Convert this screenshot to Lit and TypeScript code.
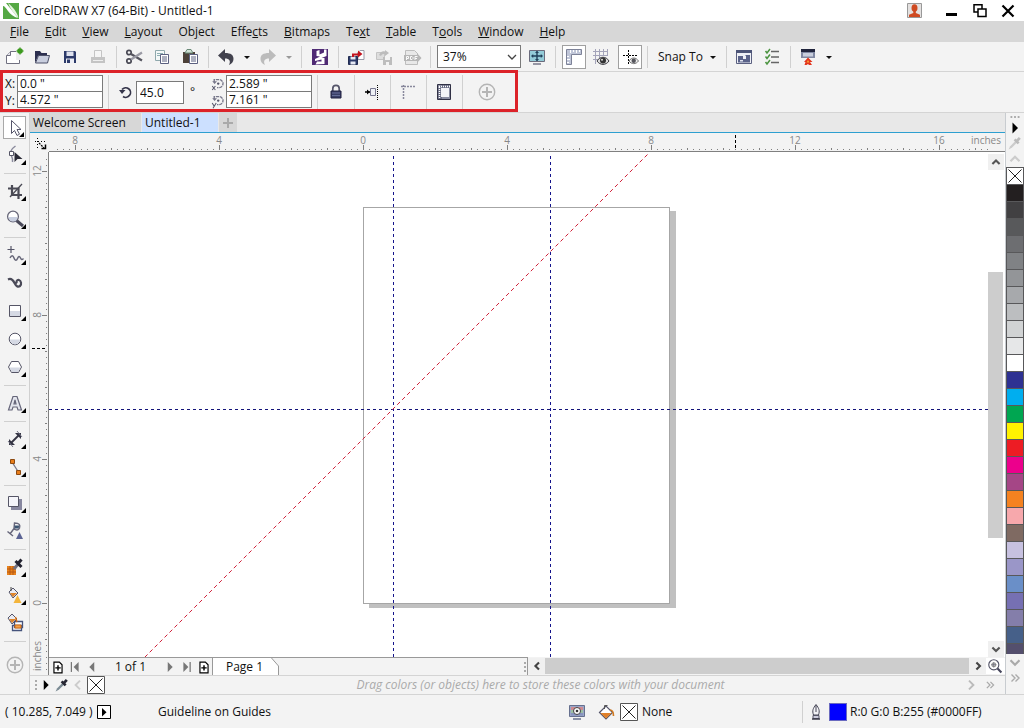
import { LitElement, html, svg, css } from "lit";
import type { SVGTemplateResult } from "lit";
import { customElement } from "lit/decorators.js";
import { styleMap } from "lit/directives/style-map.js";

/* Icon artwork, drawn on a 20 x 20 box (carets on 10 x 10). */
const art: Record<string, SVGTemplateResult> = {
  newdoc: svg`<path d="M2.500 8.500 6.500 4.500h9v12h-13z" fill="#fff" stroke="#707080"/><path d="M2.500 8.500h4v-4" fill="#e4e4ea" stroke="#707080"/><path d="M12 4h4v9h-4z" fill="#eee"/><circle cx="16" cy="4" r="2.800" fill="#3c9a1e"/><path d="M16 .3v7.400M12.300 4h7.400" stroke="#3c9a1e"/>`,
  open: svg`<path d="M3 16V4h5l1.500 2H15v3H6z" fill="#2d3050"/><path d="M6.500 8.500h11L15.500 16h-12z" fill="#c9cede" stroke="#4c5068"/>`,
  save: svg`<path d="M4 4h11l1 1v11H4z" fill="#2c3a6a"/><path d="M6.500 4.500h7v4.500h-7z" fill="#dfe2ee"/><path d="M6 11.500h8V16H6z" fill="#eceef5"/><path d="M7 12.500h3V16H7z" fill="#2c3a6a"/>`,
  print: svg`<path d="M6.500 3.500h7v7h-7z" fill="#f5f5f5" stroke="#c4c4c4"/><path d="M3 10h14v6H3z" fill="#c4c4c4"/><path d="M5 13.500h10" stroke="#eee"/>`,
  cut: svg`<circle cx="5" cy="5.500" r="2.200" fill="none" stroke="#4a4a55" stroke-width="1.700"/><circle cx="5" cy="14" r="2.200" fill="none" stroke="#4a4a55" stroke-width="1.700"/><path d="M7 7l11 6.500" stroke="#55555f" stroke-width="2.200"/><path d="M7 12.500l11-7" stroke="#9a9aa4" stroke-width="2.200"/>`,
  copy: svg`<path d="M3.500 3.500h9v10h-9z" fill="#f4f8f8" stroke="#8fa8ac"/><path d="M5 6.500h6M5 8.500h3" stroke="#8fb0b4"/><path d="M8.500 7.500h8v9h-8z" fill="#fff" stroke="#5b6080"/><path d="M10 10h5M10 12h5M10 14h5" stroke="#5b6080"/>`,
  paste: svg`<path d="M3 5h12v11H3z" fill="#4c4038"/><path d="M5 6l2-3.500h4L13 6z" fill="#cfe0d4" stroke="#6b8a78"/><path d="M9.500 7.500h8v9h-8z" fill="#fff" stroke="#5b6080"/><path d="M11 10h5M11 12h5M11 14h5" stroke="#5b6080"/>`,
  undo: svg`<path d="M2 8.500 9 2v4c6 0 8.500 2 8.500 6 0 3-2 5-4.500 6 2-4 .5-6.500-4-6.500V15z" fill="#42424e"/>`,
  redo: svg`<path d="M18 8.500 11 2v4c-6 0-8.500 2-8.500 6 0 3 2 5 4.500 6-2-4-.5-6.500 4-6.500V15z" fill="#bcbcbc"/>`,
  caret: svg`<path d="M2 4h6L5 7z" fill="#111"/>`,
  caretoff: svg`<path d="M2 4h6L5 7z" fill="#999"/>`,
  connect: svg`<path d="M2 2h16v16H2z" fill="#4f2a74"/><path d="M6.500 4 9.500 3v4.500l4.500-2V2.500h2.500V9l-5 2h3v6l-9 .5 1.500-3h4.500v-2L5 14v-2l5-2.500-3.500-.5z" fill="#fff"/>`,
  import: svg`<path d="M11.500 6 14 3.500h4v9h-6z" fill="#fff" stroke="#9a9aa8"/><path d="M2.500 9.500h9v8h-9z" fill="#2c3a6a" stroke="#222c50"/><path d="M4.500 9.500h5v3h-5zM4.500 14.500h5v3h-5z" fill="#e6e9f4"/><path d="M6 10V6.500h6V3.500L16.500 7 12 10.500v-2H8V10z" fill="#c2131f"/>`,
  export: svg`<path d="M2.500 5.500h8v7h-8z" fill="#ddd" stroke="#c4c4c4"/><path d="M5 8c2-4 4-4 6-3.500L11 3l4 3-4 3V7c-2 0-3 0-4 2z" fill="#bcbcbc"/><path d="M9 10h9v8H9z" fill="#bdbdbd"/><path d="M11 10h5v3h-5zM12 15h3v3h-3z" fill="#f3f3f3"/>`,
  pdf: svg`<path d="M3.500 3.500h9l3 3v11h-12z" fill="#e8e8e8" stroke="#bdbdbd"/><path d="M2 8h13V6l4.500 5-4.500 5v-2H2z" fill="#b6b6b6"/><path d="M4.500 13V9.500h2v2h-2M8.500 9.500h1.500l1 1v1l-1 1H8.500zM13 13V9.500h2.500M13 11.500h2" fill="none" stroke="#fafafa"/>`,
  full: svg`<path d="M2.500 3.500h15v11h-15z" fill="#93cbd8" stroke="#6b6b7c"/><path d="M10 4.500v9M5 9h10" stroke="#20405a" stroke-width="1.400"/><path d="M10 3.800l2 2.200H8zM10 14.200l2-2.200H8zM4 9l2.200-2v4zM16 9l-2.200-2v4z" fill="#20405a"/><path d="M6 17h8" stroke="#77778a" stroke-width="1.500"/>`,
  rulers: svg`<path d="M2.500 2.500h15v5h-10v10h-5z" fill="#c0c6d8" stroke="#7d8298"/><path d="M6.500 3v3M9.500 3v2M12.500 3v3M15.500 3v2M3 9.500h2M3 12.500h3M3 15.500h2" stroke="#fff"/>`,
  grid: svg`<path d="M2 4.500h15M2 8.500h15M2 12.500h8M4.500 2v15M8.500 2v14M12.500 2v7M16.500 2v7" stroke="#a4a4ba"/><path d="M6 14c3-5 9-5 12 0-3 4.500-9 4.500-12 0z" fill="#ddd" stroke="#3a3a40"/><circle cx="12" cy="13.500" r="3" fill="#333"/><circle cx="11" cy="12.800" r="1" fill="#ddd"/>`,
  guides: svg`<path d="M8.500 3v15M3 8.500h15" stroke="#000" stroke-dasharray="2 1"/><path d="M9 14c2.500-4 7-4 9.500 0-2.500 3.500-7 3.500-9.500 0z" fill="#eee" stroke="#777"/><circle cx="13.700" cy="13.800" r="2.200" fill="#55555c"/>`,
  welcome: svg`<path d="M2.500 3.500h15v13h-15z" fill="#eef0f6" stroke="#5b6080"/><path d="M2 3h16v3H2z" fill="#4d5578"/><path d="M4 9h5v3h3V9l-1-1h5v7.500H4z" fill="#5b638a"/><path d="M6 13h3v1.500H6z" fill="#dfe3ef"/>`,
  options: svg`<path d="M9 4.500h8M9 10h8M9 15.500h8" stroke="#666" stroke-width="1.600"/><path d="M3.500 4 5 6l3-4M3.500 9.500 5 11.500l3-4M3.500 15 5 17l3-4" fill="none" stroke="#4b9440" stroke-width="1.500"/>`,
  launch: svg`<path d="M3 2h14v9H3z" fill="#8088a2"/><path d="M3 2h14v3H3z" fill="#20243c"/><path d="M5 6h10v3.500H5z" fill="#c8cedd"/><path d="M10 10.500 14.500 15H12l2 3h-3l-1-1-1.500 1H6.500l1-3H6z" fill="#e2341d"/><path d="M10 13l1.500 2.500h-3z" fill="#f8a030"/>`,
  rotate: svg`<path d="M6 7.500A4.800 4.800 0 1 1 7 14.500" fill="none" stroke="#35354a" stroke-width="1.700"/><path d="M3 8h6.500L6 12z" fill="#35354a"/>`,
  lock: svg`<path d="M6.800 9V6.500a3.200 3.200 0 0 1 6.400 0V9" fill="none" stroke="#55556a" stroke-width="1.700"/><path d="M5 9h10v7H5z" fill="#3a3f66" stroke="#202040"/><path d="M6 11h8M6 13.500h8" stroke="#666d98"/>`,
  snapguide: svg`<path d="M3 10h6" stroke="#000" stroke-width="1.500"/><path d="M5 7.500 8 10l-3 2.500z" fill="#000"/><path d="M8.500 6.500h5v7h-5z" fill="#eef0f5" stroke="#777790"/><path d="M15.500 3v15" stroke="#000" stroke-dasharray="1 1"/>`,
  corner: svg`<path d="M5.500 3v14M3 4.500h15" stroke="#88889c" stroke-width="1.500" stroke-dasharray="2 1"/>`,
  page: svg`<path d="M3.500 2.500h13v15h-13z" fill="#8a8da2" stroke="#303044"/><path d="M4 6l4-3h7v11H8v3H4z" fill="#6a6d84"/><path d="M7 6h8v9H7z" fill="#f4f4f8"/><path d="M5 4.500h11M5.500 5v11" stroke="#fff" stroke-width="1.500" stroke-dasharray="1 1"/>`,
  plus: svg`<circle cx="10" cy="10" r="7.700" fill="none" stroke="#b5b5b5" stroke-width="1.400"/><path d="M10 5v10M5 10h10" stroke="#b5b5b5" stroke-width="2"/>`,
  pick: svg`<path d="M6.500 2.500v13l3-3 2.500 5 2.500-1.300-2.500-4.700h4z" fill="#fff" stroke="#55556a"/>`,
  shape: svg`<path d="M10.500 1C6 4 5 8 6.500 11S8 15 7.500 17" fill="none" stroke="#8a8a9c" stroke-width="1.500"/><path d="M4.500 6.500h4v4h-4z" fill="#fff" stroke="#555566"/><path d="M9.500 7v10l3-3h5z" fill="#2a2a36"/>`,
  crop: svg`<path d="M7 4v10h10M3 7.500h10.500V18" fill="none" stroke="#4a4a55" stroke-width="2.200"/><path d="M5 16 17 3" stroke="#4a4a55" stroke-width="1.300"/>`,
  zoom: svg`<path d="M11.500 11.500 18 17" stroke="#4a4a5a" stroke-width="3"/><circle cx="8" cy="7.500" r="5.400" fill="#fff" stroke="#666678" stroke-width="1.300"/><path d="M3.500 8h9a4.500 4.500 0 0 1-9 0z" fill="#c8cfe0"/>`,
  freehand: svg`<path d="M6 1v7M2.500 4.500h7" stroke="#555568" stroke-width="1.200"/><path d="M5 13c1.500-3 3-3 4 0s2.500 3 3.500.5 2-2.500 3-.5 1.500 2 3 .5" fill="none" stroke="#666678" stroke-width="1.500"/>`,
  artistic: svg`<path d="M3 6.500c3-1.500 5 .5 6.500 3.500s3.500 4.500 5.500 3 1-5.500-1-6-3.500 2-2 3.500" fill="none" stroke="#4a4a58" stroke-width="2.200"/>`,
  rect: svg`<path d="M4.500 4.500h11v11h-11z" fill="#fff" stroke="#555566"/><path d="M5 10h10v5H5z" fill="#d5d9e4"/>`,
  ellipse: svg`<circle cx="10" cy="10" r="5.800" fill="#fff" stroke="#555566"/><path d="M5 10.500h10a5 5 0 0 1-10 0z" fill="#d5d9e4"/>`,
  polygon: svg`<path d="M6.500 4.500h7l3 5.500-3 5.500h-7l-3-5.500z" fill="#fff" stroke="#555566"/><path d="M4.500 10.500h11l-2.500 4.500H7z" fill="#d5d9e4"/>`,
  text: svg`<path d="M3.500 17 8 3.500h4L16.500 17H13l-1-3H8l-1 3zM9 11h2l-1-4z" fill="#e4e6ee" stroke="#66667a" stroke-width="1.200"/>`,
  dimension: svg`<path d="M5 15 15 5" stroke="#333342" stroke-width="1.800"/><path d="M4 10v6h6zM16 10V4h-6z" fill="#333342"/><path d="M3 12l5 6M12 2l5 6" stroke="#777788"/>`,
  connector: svg`<path d="M7 5l7 11" stroke="#777788" stroke-width="1.300"/><path d="M5.500 2.500h4v4h-4zM11.500 13.500h4v4h-4z" fill="#e87d1a" stroke="#8c4a12"/>`,
  shadow: svg`<path d="M6 6h11v11H6z" fill="#8888a0"/><path d="M3.500 3.500h10v10h-10z" fill="#f5f5fa" stroke="#555566"/>`,
  transparency: svg`<path d="M9.500 2c5 0 6 2 5 5s-4 2-5.500.5zM9 7.500 5 13M2.500 10.500 8 15" fill="none" stroke="#66667a" stroke-width="1.400"/><path d="M9.500 4.500h5l-1 3h-4z" fill="#3c5572"/><path d="M14.500 11 18 18h-7z" fill="#5c6494"/>`,
  eyedrop: svg`<path d="M2 9h9v9H2z" fill="#e8831d"/><path d="M2 12h9M5 9v9M8 9v9M2 15h9" stroke="#b75812"/><path d="M9 12l5-6" stroke="#707080" stroke-width="3"/><path d="M10.500 4l6 6M13 6.500l3.500-4" stroke="#222230" stroke-width="3"/>`,
  fill: svg`<path d="M4 7l4-4 5 5-5 5z" fill="#e9ebf2" stroke="#55556a"/><path d="M5 8h7l-4 4z" fill="#e0852a"/><path d="M6 2v4" stroke="#444"/><path d="M12.500 10l4 8h-8z" fill="#f3b53c"/>`,
  smartfill: svg`<path d="M3 5l4-4 5 5-5 5z" fill="#e9ebf2" stroke="#55556a"/><path d="M4 6h7l-4 4z" fill="#e0852a"/><path d="M9.500 8.500h8v6h-8zM7.500 12.500h9v5h-9z" fill="#fff" stroke="#45537c" stroke-width="1.300"/><path d="M10 12h6v3h-6z" fill="#f1a04a" stroke="#d26a10"/><path d="M10.500 4l1.500 5" stroke="#d26a10" stroke-width="1.300"/>`,
  dropper: svg`<path d="M2 18l2-4 7-7 2 2-7 7z" fill="#7b8b94"/><path d="M9.500 5.500l5 5M12 8l4-4.500" stroke="#262633" stroke-width="3.400"/>`,
  dropperoff: svg`<path d="M2 18l2-4 7-7 2 2-7 7z" fill="#ccc"/><path d="M9.500 5.500l5 5M12 8l4-4.500" stroke="#bbb" stroke-width="3.400"/>`,
  addpage: svg`<path d="M5.500 4.500h6l3 3v9h-9z" fill="#fff" stroke="#000" stroke-width="1.300"/><path d="M10 8v6M7 11h6" stroke="#000" stroke-width="1.600"/>`,
  first: svg`<path d="M6 4.500v11" stroke="#777" stroke-width="1.400"/><path d="M14 4.500v11L8.500 10z" fill="#777"/>`,
  prev: svg`<path d="M12.500 4.500v11L7 10z" fill="#777"/>`,
  next: svg`<path d="M7.500 4.500v11L13 10z" fill="#777"/>`,
  last: svg`<path d="M13.500 4.500v11" stroke="#777" stroke-width="1.400"/><path d="M6 4.500v11l5.500-5.500z" fill="#777"/>`,
  play: svg`<path d="M7.500 4.500v11L13 10z" fill="#000"/>`,
  playbox: svg`<path d="M3.500 3.500h13v13h-13z" fill="#fff" stroke="#000"/><path d="M8 6v8.500l4.500-4.300z" fill="#000"/>`,
  none: svg`<path d="M1.500 1.500h17v17h-17z" fill="#fff" stroke="#555"/><path d="M3.500 3.500l13 13M16.500 3.500l-13 13" stroke="#222"/>`,
  proof: svg`<path d="M2.500 3.500h15v11h-15z" fill="#9aa6c8" stroke="#66708e"/><path d="M4 5h12v3H4z" fill="#d08a90"/><path d="M4 8h12v3H4z" fill="#9cc0a4"/><path d="M4 11h12v2.500H4z" fill="#8894c0"/><circle cx="10" cy="9" r="3.500" fill="#fff" stroke="#444"/><circle cx="10" cy="9" r="1.300" fill="#333"/><path d="M6 17h8" stroke="#66708e" stroke-width="1.500"/>`,
  bucket: svg`<path d="M3.500 10.500 10 4l6.500 6.500L10 17z" fill="#fff" stroke="#55556a" stroke-width="1.200"/><path d="M4.500 11h11L10 16.500z" fill="#e0802a"/><path d="M8.500 7V3.500h3" fill="none" stroke="#555"/><path d="M14 8c3 0 3.500 2 3.500 6" fill="none" stroke="#d07a20" stroke-width="1.600"/>`,
  pen: svg`<path d="M10 2.500c3 4 4 6 2.500 10.500h-5C6 8.500 7 6.500 10 2.500z" fill="#f2f2f6" stroke="#444454"/><path d="M10 3v7" stroke="#444454"/><path d="M7 13.500h6v3H7z" fill="#ccd" stroke="#555566"/><path d="M6 17h8" stroke="#3a3a48" stroke-width="1.500"/>`,
  zoomdoc: svg`<path d="M12 12l6 6" stroke="#44445a" stroke-width="2.600"/><circle cx="8.500" cy="8.500" r="6.300" fill="#fff" stroke="#555568" stroke-width="1.400"/><path d="M8.500 5v7M5 8.500h7" stroke="#555568"/><path d="M6.500 6.500h4v4h-4z" fill="none" stroke="#777"/>`,
  left: svg`<path d="M12.500 5.500 8 10l4.500 4.500" fill="none" stroke="#444" stroke-width="2.600"/>`,
  right: svg`<path d="M8 5.500l4.500 4.500L8 14.500" fill="none" stroke="#444" stroke-width="2.600"/>`,
  up: svg`<path d="M5.500 12.500 10 8l4.500 4.500" fill="none" stroke="#555" stroke-width="2.600"/>`,
  down: svg`<path d="M5.500 8l4.500 4.500L14.500 8" fill="none" stroke="#555" stroke-width="2.600"/>`,
  leftoff: svg`<path d="M12.500 4.500 7 10l5.500 5.500" fill="none" stroke="#ccc" stroke-width="2.400"/>`,
  rightoff: svg`<path d="M7.500 4.500 13 10l-5.500 5.500" fill="none" stroke="#bbb" stroke-width="2.400"/>`,
  upoff: svg`<path d="M5 12.500 10 7.500l5 5" fill="none" stroke="#ccc" stroke-width="2.400"/>`,
  downoff: svg`<path d="M5 8l5 5 5-5" fill="none" stroke="#aaa" stroke-width="2.400"/>`,
  more: svg`<path d="M6.500 6.500 10 10l-3.500 3.500M10.500 6.500 14 10l-3.500 3.500" fill="none" stroke="#aaa" stroke-width="1.400"/>`,
  dotsh: svg`<path d="M5 10h11" stroke="#aaa" stroke-width="2" stroke-dasharray="2 2"/>`,
  origin: svg`<path d="M7.500 5v11M5 8.500h12" stroke="#000" stroke-dasharray="1 2"/><path d="M9 10l5 5" stroke="#000" stroke-width="1.300" stroke-dasharray="2 1"/><path d="M15.500 11.500v4h-4" fill="none" stroke="#000" stroke-width="1.500"/>`,
  centerx: svg`<path d="M6.500 7.500V4.500h6a5 5 0 0 1 0 10H10" fill="none" stroke="#77778a" stroke-width="1.700" stroke-dasharray="4 1"/><circle cx="11.500" cy="9.500" r="1.500" fill="#55556a"/><path d="M4 6.500h6L7 10z" fill="#77778a"/><path d="M4 12.500l4 5M8 12.500l-4 5" stroke="#55556a" stroke-width="1.300"/>`,
  centery: svg`<path d="M6.500 7.500V4.500h6a5 5 0 0 1 0 10H10" fill="none" stroke="#77778a" stroke-width="1.700" stroke-dasharray="4 1"/><circle cx="11.500" cy="9.500" r="1.500" fill="#55556a"/><path d="M4 6.500h6L7 10z" fill="#77778a"/><path d="M4 12.500l2.500 4M9 12.500 5 19" stroke="#55556a" stroke-width="1.300"/>`,
  logo: svg`<path d="M2 2h16v16H2z" fill="#55a844"/><path d="M2 2h3l12 15c-4-1-8-4-10-7S3.500 5 2 5z" fill="#fff"/><path d="M7 2c5 4 9 9 10.500 15C12 12 9 7 7 2z" fill="#e6f3df"/>`,
  user: svg`<path d="M3.500 2.500h14v14h-14z" fill="#e4e1e0" stroke="#999"/><ellipse cx="10.500" cy="7" rx="3" ry="3.800" fill="#cf4a22"/><path d="M9.300 10h2.500v2l4.200 1.700V16H5v-2.300L9.300 12z" fill="#cf4a22"/>`,
  min: svg`<path d="M4 12h11v3H4z" fill="#000"/>`,
  restore: svg`<path d="M8 11H4V3.800h8V8" fill="none" stroke="#000" stroke-width="1.500"/><path d="M8 8h8v7.500H8z" fill="none" stroke="#000" stroke-width="1.500"/>`,
  close: svg`<path d="M4.500 4.500l11 11M15.500 4.500l-11 11" stroke="#000" stroke-width="2.200"/>`,
};

const icon = (name: string, size = 20, box = 20) => html`<svg class="icon" width=${size} height=${size} viewBox="0 0 ${box} ${box}" aria-hidden="true">${art[name]}</svg>`;
const caret = (name = "caret") => icon(name, 10, 10);

const MENUS: [string, string, string][] = [
  ["", "F", "ile"], ["", "E", "dit"], ["", "V", "iew"], ["", "L", "ayout"], ["Ob", "j", "ect"], ["Effe", "c", "ts"],
  ["", "B", "itmaps"], ["Te", "x", "t"], ["", "T", "able"], ["T", "o", "ols"], ["", "W", "indow"], ["", "H", "elp"],
];

/* Toolbox entries: icon, label, whether a flyout hangs off it. */
const TOOLS: ([string, string, boolean] | null)[] = [
  ["pick", "Pick", true], ["shape", "Shape", true], null,
  ["crop", "Crop", true], ["zoom", "Zoom", true], null,
  ["freehand", "Freehand", true], ["artistic", "Artistic media", false], ["rect", "Rectangle", true],
  ["ellipse", "Ellipse", true], ["polygon", "Polygon", true], null,
  ["text", "Text", true], null,
  ["dimension", "Dimension", true], ["connector", "Connector", true], null,
  ["shadow", "Drop shadow", true], ["transparency", "Transparency", false], null,
  ["eyedrop", "Color eyedropper", true], ["fill", "Interactive fill", true], ["smartfill", "Smart fill", false], null,
];

const SWATCHES = [
  "#231f20", "#414042", "#58595b", "#6d6e71", "#808285", "#939598", "#a7a9ac", "#bcbec0", "#d1d3d4", "#e6e7e8",
  "#ffffff", "#2e3192", "#00aeef", "#00a651", "#fff200", "#ed1c24", "#ec008c", "#a54686", "#f58220", "#f7a8ac",
  "#7f6a62", "#c7c1e0", "#9a96c8", "#6a8fc8", "#7670b3", "#847eaa", "#466089", "#544f6d",
];

const INCH = 36;
const ORIGIN_X = 314;
const ORIGIN_Y = 451;

@customElement("app-root")
export class AppRoot extends LitElement {
  static styles = css`
    :host {
      display: flex;
      flex-direction: column;
      height: 100vh;
      overflow: hidden;
      background: #f3f3f3;
      color: #111;
      font: 12px/16px "Open Sans", "Noto Sans", sans-serif;
    }
    * { box-sizing: border-box; }
    button, input, select { font: inherit; color: inherit; margin: 0; padding: 0; border: 0; background: none; border-radius: 0; }
    button { display: inline-flex; align-items: center; justify-content: center; flex: none; white-space: nowrap; }
    .icon { display: block; flex: none; }

    .titlebar { display: flex; align-items: center; height: 21px; flex: none; background: #fff; padding: 0 6px 0 1px; }
    .title { font-size: 12px; margin: 0 auto 0 3px; font-weight: 400; }
    .window-controls { display: flex; gap: 8px; }
    .user { margin-right: 18px; }

    .menubar { display: flex; align-items: center; height: 21px; flex: none; background: #d7d7d7; padding-left: 10px; gap: 16px; }

    .toolbar { display: flex; align-items: center; height: 30px; flex: none; border-bottom: 1px solid #d4d4d4; }
    .tool { width: 28px; height: 28px; }
    .drop { width: 14px; height: 28px; }
    .sep { width: 8px; height: 22px; flex: none; background: linear-gradient(#d0d0d0, #d0d0d0) center / 1px 100% no-repeat; }
    .wide { width: 10px; }
    .toggle { width: 24px; height: 24px; border: 1px solid #a0a0a0; background: #fff; margin: 0 1px 0 3px; }
    .combo { position: relative; width: 84px; height: 23px; margin: 0 2px 0 3px; flex: none; }
    .combo select { appearance: none; width: 100%; height: 100%; background: #fff; border: 1px solid #7a7a7a; padding-left: 5px; }
    .combo .icon { position: absolute; right: 2px; top: 5px; pointer-events: none; }
    .snap { width: 71px; justify-content: space-between; padding: 0 4px 0 7px; }

    .propbar { position: relative; display: flex; align-items: center; height: 41px; flex: none; border-bottom: 1px solid #d4d4d4; padding-left: 5px; }
    .highlight { position: absolute; left: 0; top: -2px; width: 518px; height: 42px; border: 3px solid #dc2229; pointer-events: none; }
    .pair { display: grid; grid-template-columns: 12px 86px; flex: none; }
    .pair label { display: flex; align-items: center; height: 17px; }
    .pair input { height: 17px; width: 86px; background: #fff; border: 1px solid #7a7a7a; padding: 0 2px; }
    .pair input.lower { height: 16px; border-top: 0; }
    .pair.center { grid-template-columns: 17px 86px; margin-left: 9px; }
    .angle { display: flex; align-items: center; margin-left: 3px; }
    .angle input { width: 48px; height: 23px; background: #fff; border: 1px solid #7a7a7a; padding: 0 3px; }
    .degree { width: 16px; padding-left: 6px; }
    .propbar .sep { height: 34px; }
    .propbar .add { margin-left: 7px; }

    .body { display: flex; flex: 1; min-height: 0; border-bottom: 1px solid #d4d4d4; }
    .toolbox { display: flex; flex-direction: column; align-items: center; width: 30px; flex: none; border-right: 1px solid #d0d0d0; }
    .toolbox button { position: relative; width: 28px; height: 28px; }
    .toolbox .add { height: 40px; }
    .toolbox .flyout::after { content: ""; position: absolute; right: 3px; bottom: 4px; border: solid transparent; border-width: 0 0 5px 5px; border-bottom-color: #000; }
    .toolbox .active { width: 23px; height: 23px; margin: 3px 0 2px; border: 1px solid #a8a8a8; background: #fff; }
    .toolbox .active.flyout::after { right: 1px; bottom: 1px; }
    .rule { width: 22px; height: 8px; flex: none; background: linear-gradient(#d0d0d0, #d0d0d0) center / 100% 1px no-repeat; }

    .workspace { display: flex; flex-direction: column; flex: 1; min-width: 0; }
    .tabs { display: flex; height: 20px; flex: none; background: #e8e8e8; border-bottom: 1px solid #2d9fd0; }
    .tab { justify-content: flex-start; background: #d7d7d7; height: 19px; padding: 0 3px; margin-right: 1px; }
    .tab.welcome { width: 111px; }
    .tab.current { width: 76px; background: #cce0ff; }
    .tab.new { width: 18px; justify-content: center; }

    .desk { display: grid; grid-template-columns: 19px minmax(0, 1fr); grid-template-rows: 19px minmax(0, 1fr) 18px; flex: 1; min-height: 0; }
    .corner { display: flex; align-items: center; justify-content: center; }
    .ruler-h { border-bottom: 1px solid #808080; overflow: hidden; display: flex; }
    .ruler-v { grid-row: span 2; border-right: 1px solid #808080; overflow: hidden; }
    .surface { display: block; width: 100%; height: 100%; }
    .ruler-text { font-size: 10px; fill: #888; }
    .view { display: flex; background: #fff; overflow: hidden; min-height: 0; }
    .view .surface { flex: 1; min-width: 0; }
    .scroll-v { display: flex; flex-direction: column; width: 17px; flex: none; padding-top: 2px; background: #fff; }
    .scroll-v button { width: 16px; height: 16px; background: #f0f0f0; }
    .track-v { flex: 1; display: flex; flex-direction: column; }
    .track-v::before { content: ""; flex: 102; }
    .track-v::after { content: ""; flex: 103; }
    .thumb-v { flex: 265; width: 15px; background: #cdcdcd; }

    .pagebar { display: flex; min-width: 0; }
    .pages { display: flex; align-items: center; width: 479px; flex: none; border-top: 1px solid #999; border-right: 1px solid #999; }
    .pages button { width: 17px; height: 17px; }
    .count { width: 61px; text-align: center; }
    .pages .grip { margin-left: auto; }
    .page-tab { position: relative; height: 17px; }
    .pages .page-tab button { position: relative; width: 68px; padding-right: 3px; }
    .page-tab .shape { position: absolute; inset: 0; }
    .scroll-h { display: flex; flex: 1; min-width: 0; height: 16px; background: #fff; margin-top: 1px; padding-right: 1px; }
    .scroll-h button { width: 17px; background: #f0f0f0; }
    .thumb-h { flex: 1; background: #cdcdcd; }
    .scroll-h .fit { width: 18px; background: #fff; }

    .tray { display: flex; align-items: center; height: 19px; flex: none; border-top: 1px solid #d4d4d4; padding: 0 4px; }
    .tray button { height: 18px; width: 16px; }
    .tray .swatch { width: 20px; }
    .hint { flex: 1; text-align: center; font-style: italic; color: #aaa; padding-left: 12px; }
    .tray .more { width: 22px; }

    .palette { display: flex; flex-direction: column; align-items: center; width: 19px; flex: none; border-left: 1px solid #c8ccd0; padding-bottom: 8px; }
    .palette button { width: 18px; height: 16px; overflow: hidden; }
    .palette .dots { height: 8px; }
    .palette .pointer { height: 14px; }
    .colors { display: flex; flex-direction: column; flex: 1; min-height: 0; overflow: hidden; width: 18px; background: #58585a; padding: 1px; gap: 1px; }
    .colors button { width: 100%; height: 16px; }

    .statusbar { display: flex; align-items: center; height: 33px; flex: none; padding: 0 8px 0 5px; }
    .cursor { width: 89px; }
    .object { margin: 0 auto 0 44px; }
    .status-group { display: flex; align-items: center; }
    .status-group.filling { gap: 9px; width: 231px; }
    .status-group .named { display: flex; align-items: center; gap: 3px; margin-left: -6px; }
    .outline { width: 210px; white-space: nowrap; }
    .outline .chip { width: 18px; height: 18px; flex: none; background: #00f; border: 1px solid #6a6ac0; margin: 0 3px; }
  `;

  private ticks(from: number, to: number, vertical: boolean) {
    const origin = vertical ? ORIGIN_Y : ORIGIN_X;
    const out = [];
    for (let k = from; k <= to; k++) {
      const p = origin + k * 6;
      const size = k % 24 === 0 ? 5 : k % 6 === 0 ? 2 : 1;
      out.push(vertical
        ? svg`<rect x=${17 - size} y=${p} width=${size} height="1" fill="#808080"></rect>`
        : svg`<rect x=${p} y=${17 - size} width="1" height=${size} fill="#808080"></rect>`);
    }
    return out;
  }

  private rulerH() {
    return html`<div class="ruler-h"><svg class="surface" role="img" aria-label="Horizontal ruler">
      ${this.ticks(-51, 104, false)}
      ${[-8, -4, 0, 4, 8, 12, 16].map((n) => svg`<text class="ruler-text" text-anchor="middle" x=${ORIGIN_X + n * INCH} y="11">${Math.abs(n)}</text>`)}
      <text class="ruler-text" text-anchor="end" x="952" y="11">inches</text>
      <path d="M686.500 2v15" stroke="#000" stroke-dasharray="3 2"></path>
    </svg></div>`;
  }

  private rulerV() {
    return html`<div class="ruler-v"><svg class="surface" role="img" aria-label="Vertical ruler">
      ${this.ticks(-74, 11, true)}
      ${[12, 8, 4, 0].map((n) => svg`<text class="ruler-text" text-anchor="middle" transform="translate(11 ${ORIGIN_Y - n * INCH}) rotate(-90)">${n}</text>`)}
      <text class="ruler-text" text-anchor="middle" transform="translate(11 504) rotate(-90)">inches</text>
      <path d="M2 196.500h15" stroke="#000" stroke-dasharray="3 2"></path>
    </svg></div>`;
  }

  private drawing() {
    return html`<svg class="surface" role="img" aria-label="Drawing page with guidelines">
      <rect x="320" y="59" width="307" height="397" fill="#c0c0c0"></rect>
      <rect x="314.500" y="55.500" width="306" height="396" fill="#fff" stroke="#a6a6a6"></rect>
      <line x1="0" y1="257.500" x2="100%" y2="257.500" stroke="#14147a" stroke-dasharray="3 3"></line>
      <path d="M344.500 4v800M501.500 4v800" stroke="#14148c" stroke-dasharray="3 3"></path>
      <path d="M598.500 2.500-1.500 602.500" stroke="#d02038" stroke-dasharray="4 3"></path>
    </svg>`;
  }

  private tool(name: string, label: string) {
    return html`<button class="tool" aria-label=${label}>${icon(name)}</button>`;
  }

  private grip() {
    return html`<svg class="icon grip" width="4" height="14" aria-hidden="true"><path d="M2 2v12" stroke="#aaa" stroke-width="2" stroke-dasharray="2 2"/></svg>`;
  }

  render() {
    return html`
      <header class="titlebar">
        ${icon("logo")}
        <h1 class="title">CorelDRAW X7 (64-Bit) - Untitled-1</h1>
        <button class="user" aria-label="Account">${icon("user")}</button>
        <div class="window-controls">
          <button aria-label="Minimize">${icon("min")}</button>
          <button aria-label="Restore">${icon("restore")}</button>
          <button aria-label="Close">${icon("close")}</button>
        </div>
      </header>

      <nav class="menubar">${MENUS.map(([a, u, b]) => html`<button>${a}<u>${u}</u>${b}</button>`)}</nav>

      <div class="toolbar" role="toolbar" aria-label="Standard">
        ${this.tool("newdoc", "New")}${this.tool("open", "Open")}${this.tool("save", "Save")}${this.tool("print", "Print")}
        <span class="sep"></span>
        ${this.tool("cut", "Cut")}${this.tool("copy", "Copy")}${this.tool("paste", "Paste")}
        <span class="sep"></span>
        ${this.tool("undo", "Undo")}<button class="drop" aria-label="Undo history">${caret()}</button>
        ${this.tool("redo", "Redo")}<button class="drop" aria-label="Redo history">${caret("caretoff")}</button>
        <span class="sep wide"></span>
        ${this.tool("connect", "Search content")}
        <span class="sep"></span>
        ${this.tool("import", "Import")}${this.tool("export", "Export")}${this.tool("pdf", "Publish to PDF")}
        <span class="sep"></span>
        <span class="combo"><select aria-label="Zoom level"><option>37%</option></select>
          <svg class="icon" width="14" height="14" viewBox="0 0 14 14"><path d="M3 5l4 4 4-4" fill="none" stroke="#444" stroke-width="1.300"/></svg></span>
        ${this.tool("full", "Full-screen preview")}
        <span class="sep"></span>
        <button class="toggle" aria-label="Show rulers" aria-pressed="true">${icon("rulers")}</button>
        ${this.tool("grid", "Show grid")}
        <button class="toggle" aria-label="Show guidelines" aria-pressed="true">${icon("guides")}</button>
        <span class="sep"></span>
        <button class="snap">Snap To ${caret()}</button>
        <span class="sep"></span>
        ${this.tool("welcome", "Welcome screen")}${this.tool("options", "Options")}
        <span class="sep"></span>
        ${this.tool("launch", "Application launcher")}<button class="drop" aria-label="Launcher list">${caret()}</button>
      </div>

      <div class="propbar">
        <div class="pair">
          <label for="x">X:</label><input id="x" value='0.0 "' />
          <label for="y">Y:</label><input id="y" class="lower" value='4.572 "' />
        </div>
        <span class="sep wide"></span>
        <div class="angle">
          <label for="angle" aria-label="Angle of rotation">${icon("rotate")}</label>
          <input id="angle" value="45.0" /><span class="degree">°</span>
        </div>
        <div class="pair center">
          <label for="cx" aria-label="Center X">${icon("centerx", 16)}</label><input id="cx" value='2.589 "' />
          <label for="cy" aria-label="Center Y">${icon("centery", 16)}</label><input id="cy" class="lower" value='7.161 "' />
        </div>
        <span class="sep wide"></span>
        ${this.tool("lock", "Lock guideline")}<span class="sep"></span>
        ${this.tool("snapguide", "Snap to guidelines")}<span class="sep"></span>
        ${this.tool("corner", "Preset guidelines")}<span class="sep"></span>
        ${this.tool("page", "Guideline options")}<span class="sep"></span>
        <button class="tool add" aria-label="Customize">${icon("plus")}</button>
        <div class="highlight"></div>
      </div>

      <main class="body">
        <aside class="toolbox">
          ${TOOLS.map((t, i) => t
            ? html`<button class="${t[2] ? "flyout" : ""} ${i === 0 ? "active" : ""}" aria-label=${t[1]}>${icon(t[0])}</button>`
            : html`<span class="rule"></span>`)}
          <button class="add" aria-label="Add tools">${icon("plus")}</button>
        </aside>

        <section class="workspace">
          <div class="tabs">
            <button class="tab welcome">Welcome Screen</button>
            <button class="tab current">Untitled-1</button>
            <button class="tab new" aria-label="New document"><svg class="icon" width="12" height="12"><path d="M6 1v10M1 6h10" stroke="#aaa" stroke-width="2"/></svg></button>
          </div>
          <div class="desk">
            <div class="corner">${icon("origin")}</div>
            ${this.rulerH()}
            ${this.rulerV()}
            <div class="view">
              ${this.drawing()}
              <div class="scroll-v">
                <button aria-label="Scroll up">${icon("up", 16)}</button>
                <div class="track-v"><div class="thumb-v"></div></div>
                <button aria-label="Scroll down">${icon("down", 16)}</button>
              </div>
            </div>
            <div class="pagebar">
              <div class="pages">
                <button aria-label="Add page before">${icon("addpage", 18)}</button>
                <button aria-label="First page">${icon("first", 18)}</button>
                <button aria-label="Previous page">${icon("prev", 18)}</button>
                <span class="count">1 of 1</span>
                <button aria-label="Next page">${icon("next", 18)}</button>
                <button aria-label="Last page">${icon("last", 18)}</button>
                <button aria-label="Add page after">${icon("addpage", 18)}</button>
                <div class="page-tab">
                  <svg class="shape" width="68" height="17"><path d="M.5 0v17h66V8l-7-8z" fill="#fff"/><path d="M.5 0v17M59.500 0l7 8v9" fill="none" stroke="#999"/></svg>
                  <button>Page 1</button>
                </div>
                ${this.grip()}
              </div>
              <div class="scroll-h">
                <button aria-label="Scroll left">${icon("left", 16)}</button>
                <div class="thumb-h"></div>
                <button aria-label="Scroll right">${icon("right", 16)}</button>
                <button class="fit" aria-label="Navigator">${icon("zoomdoc", 16)}</button>
              </div>
            </div>
          </div>
          <div class="tray">
            ${this.grip()}
            <button aria-label="Palette menu">${icon("play", 18)}</button>
            <button aria-label="Eyedropper">${icon("dropper", 16)}</button>
            <button aria-label="Previous colors">${icon("leftoff", 16)}</button>
            <button class="swatch" aria-label="No color">${icon("none")}</button>
            <span class="hint">Drag colors (or objects) here to store these colors with your document</span>
            <button aria-label="Next colors">${icon("rightoff", 16)}</button>
            <button class="more" aria-label="Expand">${icon("more", 18)}</button>
          </div>
        </section>

        <aside class="palette">
          <button class="dots" aria-label="Move palette">${icon("dotsh", 18)}</button>
          <button class="pointer" aria-label="Palette options">${icon("play")}</button>
          <button aria-label="Sample color">${icon("dropperoff", 16)}</button>
          <button aria-label="Scroll palette up">${icon("upoff", 18)}</button>
          <div class="colors">
            <button aria-label="No color">${icon("none")}</button>
            ${SWATCHES.map((c) => html`<button aria-label=${c} style=${styleMap({ background: c })}></button>`)}
          </div>
          <button aria-label="Scroll palette down">${icon("downoff", 18)}</button>
          <button aria-label="Expand palette">${icon("more")}</button>
        </aside>
      </main>

      <footer class="statusbar">
        <span class="cursor">( 10.285, 7.049 )</span>
        <button aria-label="Cursor details">${icon("playbox")}</button>
        <span class="object">Guideline on Guides</span>
        <div class="status-group filling">
          ${icon("proof")}${icon("bucket")}
          <span class="named">${icon("none")}None</span>
        </div>
        <span class="sep"></span>
        <div class="status-group outline">${icon("pen")}<span class="chip"></span>R:0 G:0 B:255 (#0000FF)</div>
      </footer>
    `;
  }
}
